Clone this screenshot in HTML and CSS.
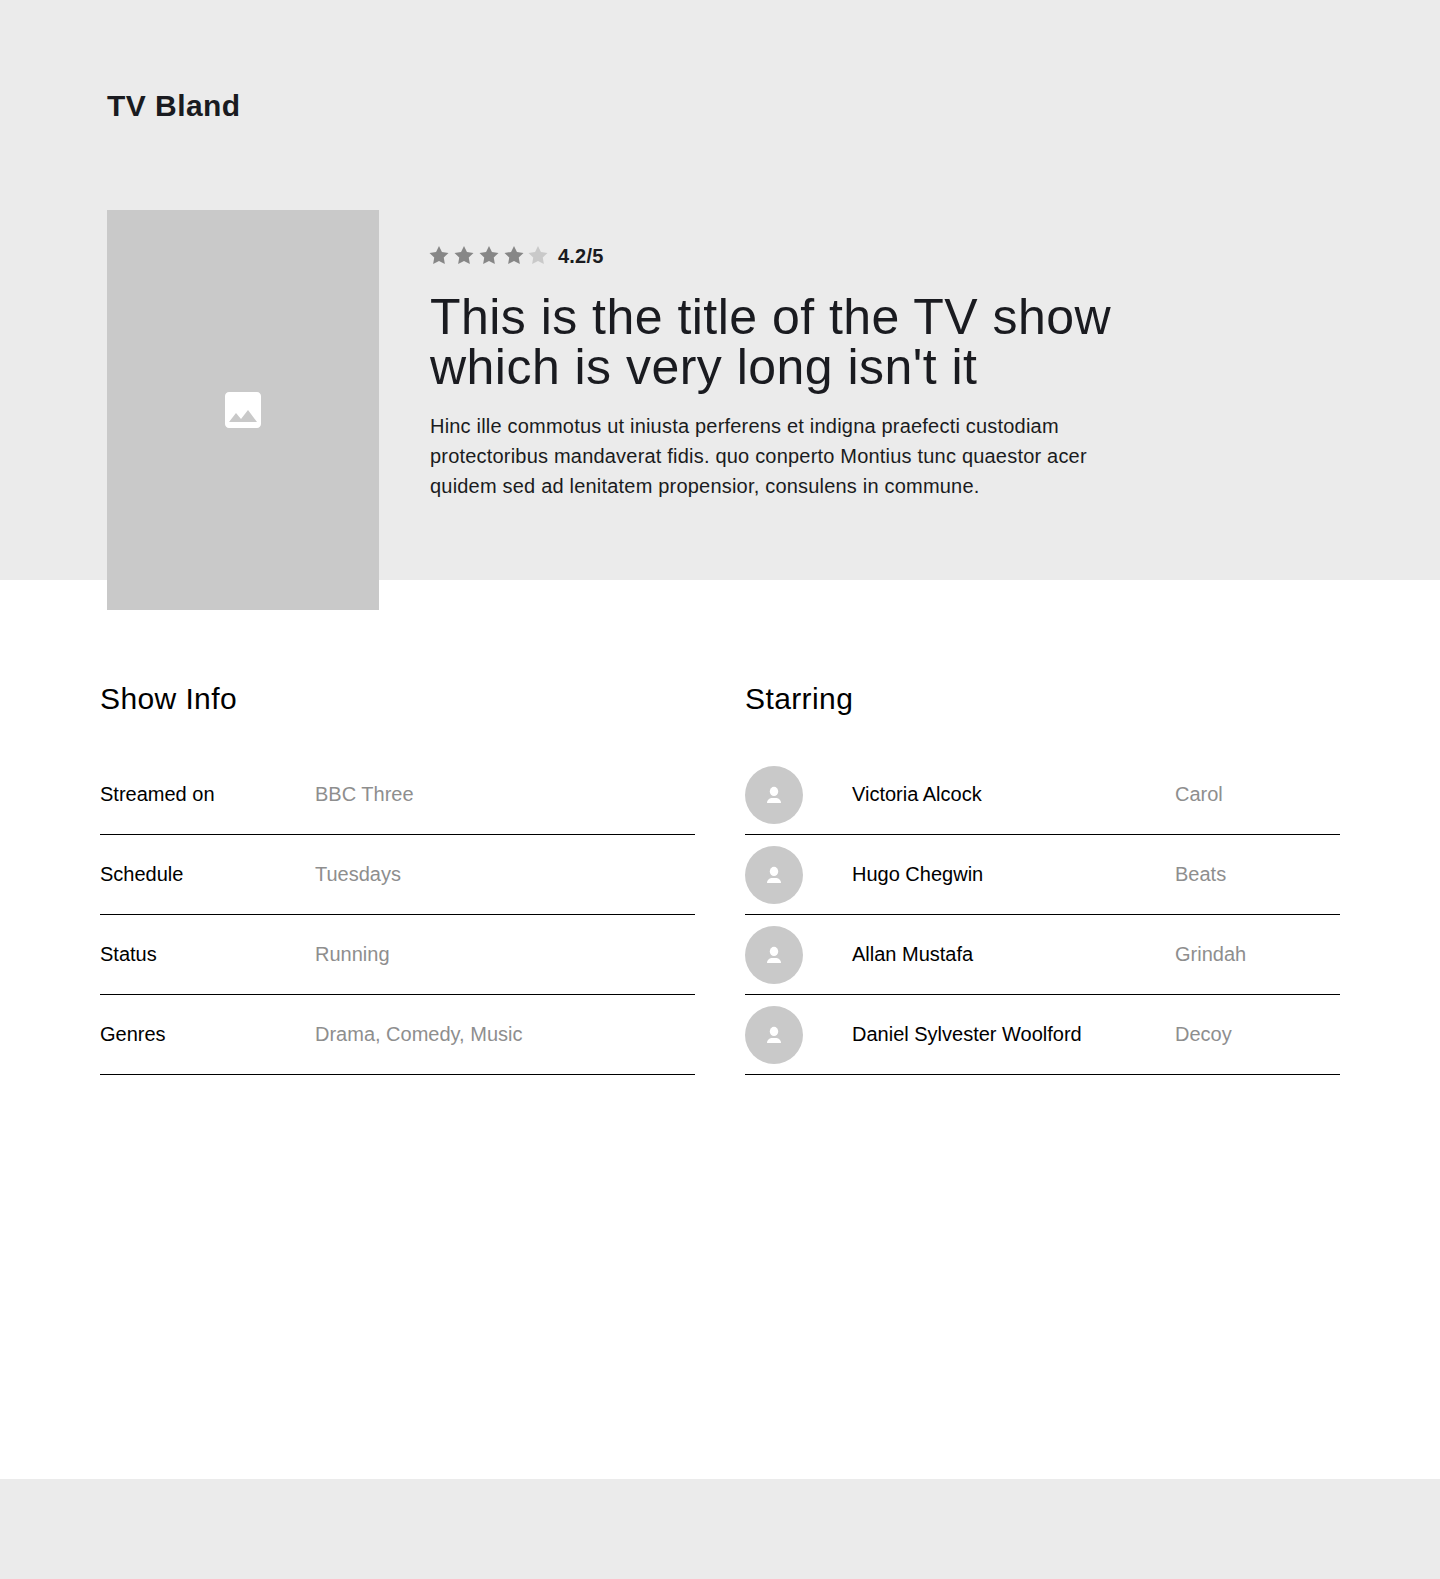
FILE: index.html
```html
<!DOCTYPE html>
<html lang="en">
<head>
<meta charset="utf-8">
<title>TV Bland</title>
<link rel="stylesheet" href="styles.css">
</head>
<body>
<svg class="defs" aria-hidden="true">
  <symbol id="star" viewBox="0 0 20 19"><path d="M10 15l-5.878 3.090 1.123-6.545L.489 6.910l6.572-.955L10 0l2.939 5.955 6.572.955-4.756 4.635 1.123 6.545z"/></symbol>
  <symbol id="person" viewBox="0 0 24 24"><ellipse cx="12" cy="9.400" rx="4.200" ry="4.600"/><path d="M5 21c0-2.800 2.300-5 5-5h4c2.700 0 5 2.200 5 5z"/></symbol>
</svg>
<header class="hero">
  <a class="logo">TV Bland</a>
  <div class="show">
    <div class="poster">
      <svg width="48" height="48" viewBox="0 0 24 24"><path d="M21 19V5c0-1.100-.9-2-2-2H5c-1.100 0-2 .9-2 2v14c0 1.100.9 2 2 2h14c1.100 0 2-.9 2-2zM8.500 13.500l2.500 3.010L14.500 12l4.500 6H5l3.500-4.500z"/></svg>
    </div>
    <div class="summary">
      <div class="rating">
        <div class="stars">
          <svg><use href="#star"/></svg>
          <svg><use href="#star"/></svg>
          <svg><use href="#star"/></svg>
          <svg><use href="#star"/></svg>
          <svg class="empty"><use href="#star"/></svg>
        </div>
        <span class="score">4.2/5</span>
      </div>
      <h1>This is the title of the TV show which is very long isn't it</h1>
      <p>Hinc ille commotus ut iniusta perferens et indigna praefecti custodiam protectoribus mandaverat fidis. quo conperto Montius tunc quaestor acer quidem sed ad lenitatem propensior, consulens in commune.</p>
    </div>
  </div>
</header>
<main class="details">
  <section>
    <h2>Show Info</h2>
    <ul class="info">
      <li><span>Streamed on</span><span class="muted">BBC Three</span></li>
      <li><span>Schedule</span><span class="muted">Tuesdays</span></li>
      <li><span>Status</span><span class="muted">Running</span></li>
      <li><span>Genres</span><span class="muted">Drama, Comedy, Music</span></li>
    </ul>
  </section>
  <section>
    <h2>Starring</h2>
    <ul class="cast">
      <li><i class="avatar"><svg><use href="#person"/></svg></i><span>Victoria Alcock</span><span class="muted">Carol</span></li>
      <li><i class="avatar"><svg><use href="#person"/></svg></i><span>Hugo Chegwin</span><span class="muted">Beats</span></li>
      <li><i class="avatar"><svg><use href="#person"/></svg></i><span>Allan Mustafa</span><span class="muted">Grindah</span></li>
      <li><i class="avatar"><svg><use href="#person"/></svg></i><span>Daniel Sylvester Woolford</span><span class="muted">Decoy</span></li>
    </ul>
  </section>
</main>
<footer class="footer"></footer>
</body>
</html>
```
FILE: styles.css
```css
* { box-sizing: border-box; }

body {
  margin: 0;
  min-height: 1579px;
  display: flex;
  flex-direction: column;
  background: #fff;
  color: #000;
  font: 20px/30px "Liberation Sans", Arial, sans-serif;
}

h1, h2, p, ul { margin: 0; padding: 0; font-weight: 400; }
.defs { display: none; }

.hero {
  height: 580px;
  padding: 86px 107px 0;
  background: #ebebeb;
  color: #1a1b20;
}

.logo {
  display: block;
  font-size: 30px;
  line-height: 40px;
  font-weight: 700;
  letter-spacing: .45px;
}

.show { display: flex; gap: 51px; margin-top: 84px; }

.poster {
  width: 272px;
  height: 400px;
  display: flex;
  align-items: center;
  justify-content: center;
  background: #c9c9c9;
  fill: #fff;
}

.summary { width: 700px; padding-top: 31px; }
.rating { display: flex; gap: 10px; height: 30px; }
.stars { display: flex; gap: 5px; padding-top: 5px; margin-left: -1px; fill: #878787; }
.stars svg { width: 20px; height: 19px; }
.stars .empty { fill: #c9c9c9; margin-left: -1px; }
.score { font-weight: 700; letter-spacing: .2px; }

h1 {
  margin-top: 21px;
  font-size: 50px;
  line-height: 50px;
  letter-spacing: .47px;
}

.summary p { margin-top: 19px; letter-spacing: .2px; }

.details {
  flex: 1;
  display: grid;
  grid-template-columns: 1fr 1fr;
  gap: 50px;
  padding: 99px 100px 0;
}

h2 {
  font-size: 30px;
  line-height: 40px;
  letter-spacing: .4px;
  margin-bottom: 36px;
}

li {
  display: grid;
  align-items: center;
  height: 80px;
  border-bottom: 1px solid #000;
}
li span { padding-bottom: 2px; }

.info li { grid-template-columns: 215px 1fr; }
.cast li { grid-template-columns: 107px 323px 1fr; }
.muted { color: #8e8e8e; }

.avatar {
  width: 58px;
  height: 58px;
  margin-top: 1px;
  padding-bottom: 2px;
  display: flex;
  align-items: center;
  justify-content: center;
  border-radius: 50%;
  background: #c9c9c9;
  fill: #fff;
}
.avatar svg { width: 24px; height: 24px; }

.footer { height: 100px; background: #ebebeb; }
```
